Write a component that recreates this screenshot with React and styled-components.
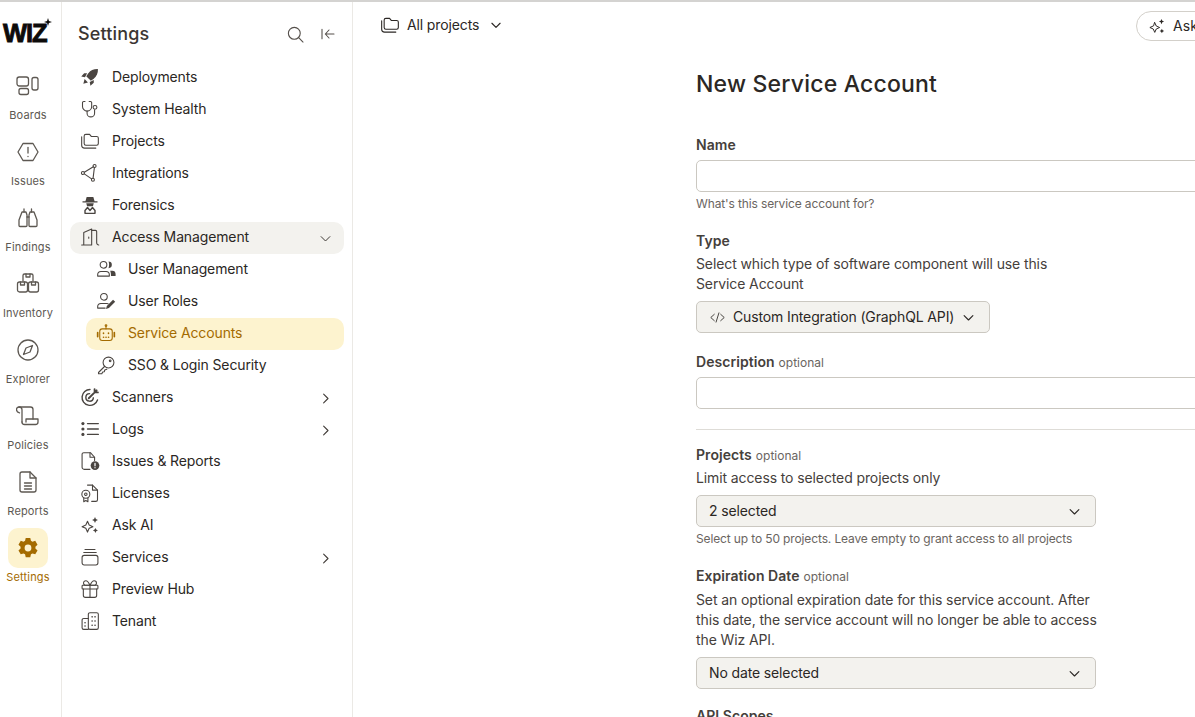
import React from "react";
import styled, { createGlobalStyle } from "styled-components";

const Global = createGlobalStyle`
  html, body { margin: 0; padding: 0; height: 100%; overflow: hidden; background: #fff; }
  body { font-family: Inter, "Liberation Sans", sans-serif; color: #2b2724; -webkit-font-smoothing: antialiased; }
  #root { height: 100%; }
  * { box-sizing: border-box; }
`;

const Page = styled.div`
  width: 1195px; height: 717px; display: flex; overflow: hidden;
  border-top: 2px solid #d4d3d1;
`;
const Rail = styled.nav`
  width: 62px; flex: none; border-right: 1px solid #ebe9e5;
  display: flex; flex-direction: column; align-items: flex-start;
`;
const LogoWrap = styled.div`
  width: 61px; height: 64px; position: relative; padding: 16px 0 0 3px;
  display: flex; align-items: flex-start;
`;
const LogoText = styled.span`
  font-family: "Liberation Sans", Arial, sans-serif; font-weight: 700; font-size: 25.5px; line-height: 30px;
  color: #0d0b0a; letter-spacing: -1.1px; -webkit-text-stroke: 0.9px #0d0b0a;
`;
const LogoStar = styled.svg`
  position: absolute; left: 44px; top: 16px; width: 8px; height: 8px;
`;
const RailList = styled.div`display: flex; flex-direction: column; gap: 9px;`;
const RailItem = styled.a`
  width: 56px; height: 57px; display: flex; flex-direction: column; align-items: center; gap: 1px;
  color: ${p => (p.$active ? "#a46b00" : "#5d5852")};
`;
const RailIconBox = styled.span`
  width: 40px; height: 40px; border-radius: 10px; display: flex; align-items: center; justify-content: center;
  background: ${p => (p.$active ? "#fdf3cf" : "transparent")};
`;
const RailLabel = styled.span`font-size: 11px; line-height: 16px; letter-spacing: 0.15px; white-space: nowrap;`;

const Sidebar = styled.aside`
  width: 291px; flex: none; border-right: 1px solid #ebe9e5; padding: 0 8px;
  display: flex; flex-direction: column;
`;
const SideHead = styled.div`
  height: 60px; display: flex; align-items: center; padding: 2px 0 0 8px; color: #3f3a36;
`;
const SideTitle = styled.h2`
  font-size: 18px; font-weight: 500; margin: 0; flex: 1; letter-spacing: 0.15px; color: #3b3633;
`;
const HeadBtns = styled.div`
  display: flex; align-items: center; gap: 15px; padding: 2px 8px 0 0; color: #544f4a;
`;
const SideList = styled.div`display: flex; flex-direction: column;`;
const Row = styled.a`
  height: 32px; display: flex; align-items: center; border-radius: 10px;
  margin-left: ${p => (p.$sub ? "16px" : "0")};
  padding-left: 9px;
  padding-right: 11px; gap: 12px;
  font-size: 14px; letter-spacing: -0.13px;
  background: ${p => (p.$active ? "#fdf3cf" : p.$open ? "#f3f2ee" : "transparent")};
  color: ${p => (p.$active ? "#a46b00" : "#2b2724")};
`;
const RowIcon = styled.span`
  width: 21px; height: 20px; flex: none; display: flex; align-items: center; justify-content: center;
  position: relative; top: -1px;
  color: ${p => (p.$active ? "#a46b00" : "#4a4541")};
`;
const RowText = styled.span`flex: 1; white-space: nowrap; position: relative; top: -2px;`;
const Caret = styled.span`display: flex; color: #3f3a36;`;

const Main = styled.main`flex: 1; min-width: 0; display: flex; flex-direction: column; overflow: hidden;`;
const TopBar = styled.header`
  height: 48px; flex: none; display: flex; align-items: center; justify-content: space-between;
  padding: 0 0 0 27px; position: relative;
`;
const ProjectPick = styled.div`
  display: flex; align-items: center; font-size: 14px; letter-spacing: -0.13px; position: relative; top: -1px;
`;
const ProjectLabel = styled.span`margin: 0 10px 0 7px; position: relative; top: -1px;`;
const AskBtn = styled.button`
  width: 120px; height: 30px; flex: none; margin: -1px -61px 0 0; border: 1px solid #d3d0ca; border-radius: 15px; background: #fff;
  display: flex; align-items: center; gap: 7px; padding: 0 0 0 11px;
  font: 400 14px Inter, sans-serif; letter-spacing: 0.1px; color: #2b2724;
`;
const Form = styled.div`
  width: 620px; flex: none; margin-left: 343px; display: flex; flex-direction: column;
`;
const Title = styled.h1`
  font-size: 23px; line-height: 30px; font-weight: 500; margin: 19px 0 36px; letter-spacing: 0.2px; color: #2b2724;
`;
const Field = styled.div`display: flex; flex-direction: column; margin-bottom: ${p => p.$mb || 0}px;`;
const Label = styled.label`
  font-size: 14px; line-height: 20px; font-weight: 600; color: #45403b; letter-spacing: 0.05px;
  margin-bottom: ${p => p.$gap || 0}px;
`;
const Optional = styled.span`font-size: 12px; font-weight: 400; color: #6a655f; margin-left: 4px; letter-spacing: 0.02px;`;
const Help = styled.p`
  width: 403px; margin: 0; font-size: 14px; line-height: 20px; letter-spacing: -0.11px; color: #45403b;
`;
const Hint = styled.p`
  margin: 4px 0 0; font-size: 12px; line-height: 16px; letter-spacing: -0.13px; color: #6a655f;
`;
const Input = styled.div`
  width: 620px; height: 32px; margin-top: ${p => p.$mt ?? 5}px; border: 1px solid #cbc8c1; border-radius: 5px; background: #fff;
`;
const Select = styled.div`
  width: ${p => (p.$auto ? "294px" : "400px")}; height: 32px; margin-top: 7px;
  border: 1px solid #cbc8c1; border-radius: 5px; background: #f3f2ee;
  display: flex; align-items: center; justify-content: space-between;
  padding: 0 13px 0 12px; font-size: 14px; letter-spacing: -0.13px; color: #2b2724;
`;
const SelectText = styled.span`position: relative; top: -1px;`;
const SelectLead = styled.span`display: flex; align-items: center; gap: 7px; white-space: nowrap;`;
const Divider = styled.hr`width: 620px; border: 0; border-top: 1px solid #dedcd7; margin: 20px 0 15px;`;

const Svg = styled.svg`
  width: ${p => p.$s || 20}px; height: ${p => p.$s || 20}px; flex: none; display: block;
  fill: none; stroke: currentColor; stroke-width: ${p => p.$w || 1.3}; stroke-linecap: round; stroke-linejoin: round;
`;
const I = ({ s, w, children }) => <Svg viewBox="0 0 24 24" $s={s} $w={w}>{children}</Svg>;
const Solid = styled.g`fill: currentColor; stroke: none;`;

const Boards = () => <I s={24}><rect x="1" y="3" width="11.500" height="9" rx="2.200"/><rect x="3" y="14.500" width="9.500" height="6" rx="2"/><rect x="16" y="3.500" width="6" height="12.500" rx="2"/></I>;
const Issues = () => <I s={24}><path d="M2 12 7 3.500h10L22 12l-5 8.500H7Z"/><path d="M12 7.500v5.500"/><path d="M12 16.300v.2"/></I>;
const Findings = () => <I s={24}><path d="M8 3v3M15.500 3v3"/><path d="M6 6h4l1 3v10.500a1 1 0 0 1-1 1H4a1 1 0 0 1-1-1V14Z"/><path d="M14 6h4l3 8v5.500a1 1 0 0 1-1 1h-6a1 1 0 0 1-1-1V9Z"/><path d="M11 11h2"/></I>;
const Inventory = () => <I s={24}><path d="M7 9V3.500a1.500 1.500 0 0 1 1.500-1.500h7A1.500 1.500 0 0 1 17 3.500V9"/><path d="M10 2v3h4V2"/><rect x="1.500" y="10" width="10" height="10" rx="2"/><rect x="12.500" y="10" width="10" height="10" rx="2"/><path d="M4.500 10v3h4v-3M15.500 10v3h4v-3"/></I>;
const Explorer = () => <I s={24}><circle cx="12" cy="12" r="10"/><path d="M16.500 7.500 14 14l-6.500 2.500L10 10Z"/></I>;
const Policies = () => <I s={24}><path d="M6 18V6a3 3 0 0 0-3-3 2.500 2.500 0 0 0-2.500 2.500c0 2 1.200 3 3 3.300"/><path d="M3 3h11.500A2.500 2.500 0 0 1 17 5.500V15"/><path d="M6 18a2.500 2.500 0 0 0 2.500 2.500h11a2.500 2.500 0 0 0 2.500-2.500v-3H10v3"/></I>;
const Reports = () => <I s={24}><path d="M14 2H6a2 2 0 0 0-2 2v16a2 2 0 0 0 2 2h12a2 2 0 0 0 2-2V8Z"/><path d="M14 2v6h6"/><path d="M8.500 13h7M8.500 16h7M8.500 19h7"/></I>;
const Gear = () => <svg viewBox="0 0 24 24" width="22" height="22"><path fill="currentColor" fillRule="evenodd" d="M9.500 1h5l.7 3.100 1.700 1 3-1 2.500 4.300-2.300 2.100v2l2.300 2.100-2.500 4.300-3-1-1.700 1-.7 3.100h-5l-.7-3.100-1.700-1-3 1-2.500-4.300 2.300-2.100v-2L1.600 8.400l2.500-4.300 3 1 1.700-1ZM12 8.300a3.700 3.700 0 1 0 0 7.400 3.700 3.700 0 0 0 0-7.400Z"/></svg>;

const Rocket = () => <I><Solid><path d="M21.500 2.500c-5-.2-8.700 1.500-11.500 5L7.500 11l5.500 5.500 3.500-2.500c3.500-2.800 5.200-6.500 5-11.500Z"/><path d="M8.500 7.500H5l-3.500 4 4.500.8ZM16.500 15.500V19l-4 3.500-.8-4.500Z"/><path d="M5.500 14.500 9.500 18.500 4 20Z"/></Solid></I>;
const Stetho = () => <I><path d="M6 3H4.500A1.500 1.500 0 0 0 3 4.500V9a5.500 5.500 0 0 0 11 0V4.500A1.500 1.500 0 0 0 12.500 3H11"/><path d="M8.500 14.500V17a4.500 4.500 0 0 0 9 0v-4"/><circle cx="18" cy="10" r="2.300"/></I>;
const Folders = () => <I><path d="M7 4h4.500l2 2.500H20a2 2 0 0 1 2 2V15a2 2 0 0 1-2 2H7a2 2 0 0 1-2-2V6a2 2 0 0 1 2-2Z"/><path d="M2 7v10a3.500 3.500 0 0 0 3.500 3.500H19"/></I>;
const Integrations = () => <I><circle cx="3.500" cy="12" r="1.800"/><circle cx="17.500" cy="3.500" r="1.800"/><circle cx="15.500" cy="20" r="1.800"/><path d="M5.200 11 16 4.500M5.200 13l8.700 6M17.300 5.300 15.700 18.200"/></I>;
const Forensics = () => <I><Solid><path d="M8 2.500h8l1.500 5H21v1.500H3V7.500h3.500Z"/><path d="M7.500 10h9l-1 3.500h-7Z"/></Solid><path d="M6 22v-3.500l3-3.500 3 3.500 3-3.500 3 3.500V22Z" strokeWidth="1.700"/></I>;
const Door = () => <I><path d="M2 21.500h2.500V6.500L14 2.500v19H2"/><path d="M14 4h4.500a1.500 1.500 0 0 1 1.500 1.500V19a2.500 2.500 0 0 0 2.500 2.500"/><path d="M10.500 12v1.500"/></I>;
const UserMgmt = () => <I><circle cx="9" cy="7" r="4"/><path d="M2 20.500v-1.500a4 4 0 0 1 4-4h6a4 4 0 0 1 4 4v1.500Z"/><Solid><path d="M15 3a4 4 0 1 1 0 8c1-2.300 1-5.700 0-8Z"/><path d="M17 14h2.500a4 4 0 0 1 4 4v2.500H18c0-2.500-.2-4.500-1-6.500Z"/></Solid></I>;
const UserRoles = () => <I><circle cx="9.500" cy="7" r="4"/><path d="M2 20.500V19a4 4 0 0 1 4-4h7a3 3 0 0 1 1.500.4M2 20.500h9"/><Solid><path d="M20.500 10.500 23 13l-7.500 7.500-3.500 1 1-3.500Z"/></Solid></I>;
const Bot = () => <I><rect x="4.500" y="7" width="15" height="14" rx="3"/><path d="M12 7V3.500"/><circle cx="12" cy="3" r="1"/><path d="M2 11.500v5M22 11.500v5" strokeWidth="2"/><path d="M9 12v.5M15 12v.5M9 17h.1M12 17h.1M15 17h.1" strokeWidth="1.900"/></I>;
const Key = () => <I><circle cx="15" cy="9" r="6.500"/><path d="M10.500 13.500 3 21v1.500h4l1-2 2-.5.500-2 2.500-1"/><circle cx="17" cy="7" r="1"/></I>;
const Scanners = () => <I w={1.700}><path d="M12 3a9.500 9.500 0 1 0 9 12.500"/><path d="M11.500 8a4.500 4.500 0 1 0 4.500 5"/><path d="M10.500 13.500 20 4M17.500 2.500v4h4" strokeWidth="2.200"/></I>;
const Logs = () => <I w={1.600}><path d="M9 5.500h13M9 12h13M9 18.500h13"/><Solid><circle cx="3.500" cy="5.500" r="1.900"/><circle cx="3.500" cy="12" r="1.900"/><circle cx="3.500" cy="18.500" r="1.900"/></Solid></I>;
const IssueDoc = () => <I><path d="M12 22H5a2.500 2.500 0 0 1-2.500-2.500V4A2 2 0 0 1 4.500 2h8l5 5.500v4"/><path d="M12 2v5.500h5.500"/><Solid><circle cx="18" cy="17.500" r="5.200"/></Solid><path d="M18 14.800v3M18 20v.2" stroke="#fff" strokeWidth="1.500"/></I>;
const License = () => <I><path d="M9 2.500h6l6 6V20a2 2 0 0 1-2 2h-5"/><path d="M15 2.500v6h6"/><circle cx="7" cy="13.500" r="4.800"/><circle cx="7" cy="13.500" r="1.500"/><path d="M4.500 18v4.500L7 21l2.500 1.500V18"/></I>;
const Spark = ({ s }) => <I s={s}><path d="M9 7.500 11 12l4.500 2-4.500 2-2 4.500L7 16l-4.500-2L7 12Z"/><Solid><path d="M18 2.500l1.100 2.400L21.500 6l-2.400 1.100L18 9.500l-1.100-2.400L14.500 6l2.400-1.100ZM18.500 15.500l1 2 2 1-2 1-1 2-1-2-2-1 2-1Z"/></Solid></I>;
const Services = () => <I><path d="M6 3h12M4.500 6.500h15"/><rect x="2.500" y="10" width="19" height="11.500" rx="2.500"/></I>;
const Gift = () => <I><rect x="2.500" y="7.500" width="19" height="4.500" rx="1"/><path d="M4 12v7.500A2.500 2.500 0 0 0 6.500 22h11a2.500 2.500 0 0 0 2.500-2.500V12"/><path d="M12 7.500V22"/><path d="M12 7.500C10 3 8.500 2 7 2a2.700 2.700 0 0 0 0 5.500ZM12 7.500C14 3 15.500 2 17 2a2.700 2.700 0 0 1 0 5.500Z"/></I>;
const Tenant = () => <I><rect x="10" y="2" width="12" height="20" rx="2"/><path d="M10 9H4.500a2 2 0 0 0-2 2v9a2 2 0 0 0 2 2H10"/><path d="M14.500 7h.1M18 7h.1M14.500 12h.1M18 12h.1M14.500 17h.1M18 17h.1M6 14h.1M6 18h.1" strokeWidth="1.900"/></I>;
const Down = ({ s = 15, w = 1.800 }) => <I s={s} w={w}><path d="m5 9 7 7 7-7"/></I>;
const Right = () => <I s={15} w={1.700}><path d="m9 5 7 7-7 7"/></I>;
const SearchIco = () => <I s={19} w={1.400}><circle cx="10.500" cy="10.500" r="7.500"/><path d="m16 16 5.500 5.500"/></I>;
const Collapse = () => <I s={16} w={1.600}><path d="M3 5v14M21 12H8M13.500 6 8 12l5.500 6"/></I>;
const CodeIco = () => <I s={17} w={1.200}><path d="M7.500 7.500 2.500 12l5 4.500M16.500 7.500l5 4.500-5 4.500M14 5.500 10 18.500"/></I>;

const railItems = [
  ["Boards", Boards], ["Issues", Issues], ["Findings", Findings], ["Inventory", Inventory],
  ["Explorer", Explorer], ["Policies", Policies], ["Reports", Reports], ["Settings", Gear, true],
];
const rows = [
  { t: "Deployments", i: Rocket }, { t: "System Health", i: Stetho }, { t: "Projects", i: Folders },
  { t: "Integrations", i: Integrations }, { t: "Forensics", i: Forensics },
  { t: "Access Management", i: Door, open: true, c: "down" },
  { t: "User Management", i: UserMgmt, sub: true }, { t: "User Roles", i: UserRoles, sub: true },
  { t: "Service Accounts", i: Bot, sub: true, active: true }, { t: "SSO & Login Security", i: Key, sub: true },
  { t: "Scanners", i: Scanners, c: "right" }, { t: "Logs", i: Logs, c: "right" },
  { t: "Issues & Reports", i: IssueDoc }, { t: "Licenses", i: License }, { t: "Ask AI", i: Spark },
  { t: "Services", i: Services, c: "right" }, { t: "Preview Hub", i: Gift }, { t: "Tenant", i: Tenant },
];

export default function App() {
  return (
    <Page>
      <Global />
      <Rail>
        <LogoWrap>
          <LogoText>WIZ</LogoText>
          <LogoStar viewBox="0 0 10 10"><path fill="#0d0b0a" d="M5 0l1.200 3.800L10 5 6.200 6.200 5 10 3.800 6.200 0 5l3.800-1.200Z" /></LogoStar>
        </LogoWrap>
        <RailList>
          {railItems.map(([label, Ico, active]) => (
            <RailItem key={label} $active={active}>
              <RailIconBox $active={active}><Ico /></RailIconBox>
              <RailLabel>{label}</RailLabel>
            </RailItem>
          ))}
        </RailList>
      </Rail>
      <Sidebar>
        <SideHead>
          <SideTitle>Settings</SideTitle>
          <HeadBtns><SearchIco /><Collapse /></HeadBtns>
        </SideHead>
        <SideList>
          {rows.map(({ t, i: Ico, sub, open, active, c }) => (
            <Row key={t} $sub={sub} $open={open} $active={active}>
              <RowIcon $active={active}><Ico /></RowIcon>
              <RowText>{t}</RowText>
              {c && <Caret>{c === "down" ? <Down s={15} w={1.600} /> : <Right />}</Caret>}
            </Row>
          ))}
        </SideList>
      </Sidebar>
      <Main>
        <TopBar>
          <ProjectPick>
            <Folders />
            <ProjectLabel>All projects</ProjectLabel>
            <Down s={14} w={2} />
          </ProjectPick>
          <AskBtn><Spark s={18} />Ask AI</AskBtn>
        </TopBar>
        <Form>
          <Title>New Service Account</Title>
          <Field $mb={19}>
            <Label>Name</Label>
            <Input />
            <Hint>What's this service account for?</Hint>
          </Field>
          <Field $mb={19}>
            <Label $gap={3}>Type</Label>
            <Help>Select which type of software component will use this Service Account</Help>
            <Select $auto>
              <SelectLead><CodeIco /><SelectText>Custom Integration (GraphQL API)</SelectText></SelectLead>
              <Down />
            </Select>
          </Field>
          <Field>
            <Label>Description<Optional>optional</Optional></Label>
            <Input $mt={4} />
          </Field>
          <Divider />
          <Field $mb={19}>
            <Label $gap={2}>Projects<Optional>optional</Optional></Label>
            <Help>Limit access to selected projects only</Help>
            <Select><SelectText>2 selected</SelectText><Down /></Select>
            <Hint>Select up to 50 projects. Leave empty to grant access to all projects</Hint>
          </Field>
          <Field $mb={17}>
            <Label $gap={3}>Expiration Date<Optional>optional</Optional></Label>
            <Help>Set an optional expiration date for this service account. After this date, the service account will no longer be able to access the Wiz API.</Help>
            <Select><SelectText>No date selected</SelectText><Down /></Select>
          </Field>
          <Field>
            <Label>API Scopes</Label>
          </Field>
        </Form>
      </Main>
    </Page>
  );
}
